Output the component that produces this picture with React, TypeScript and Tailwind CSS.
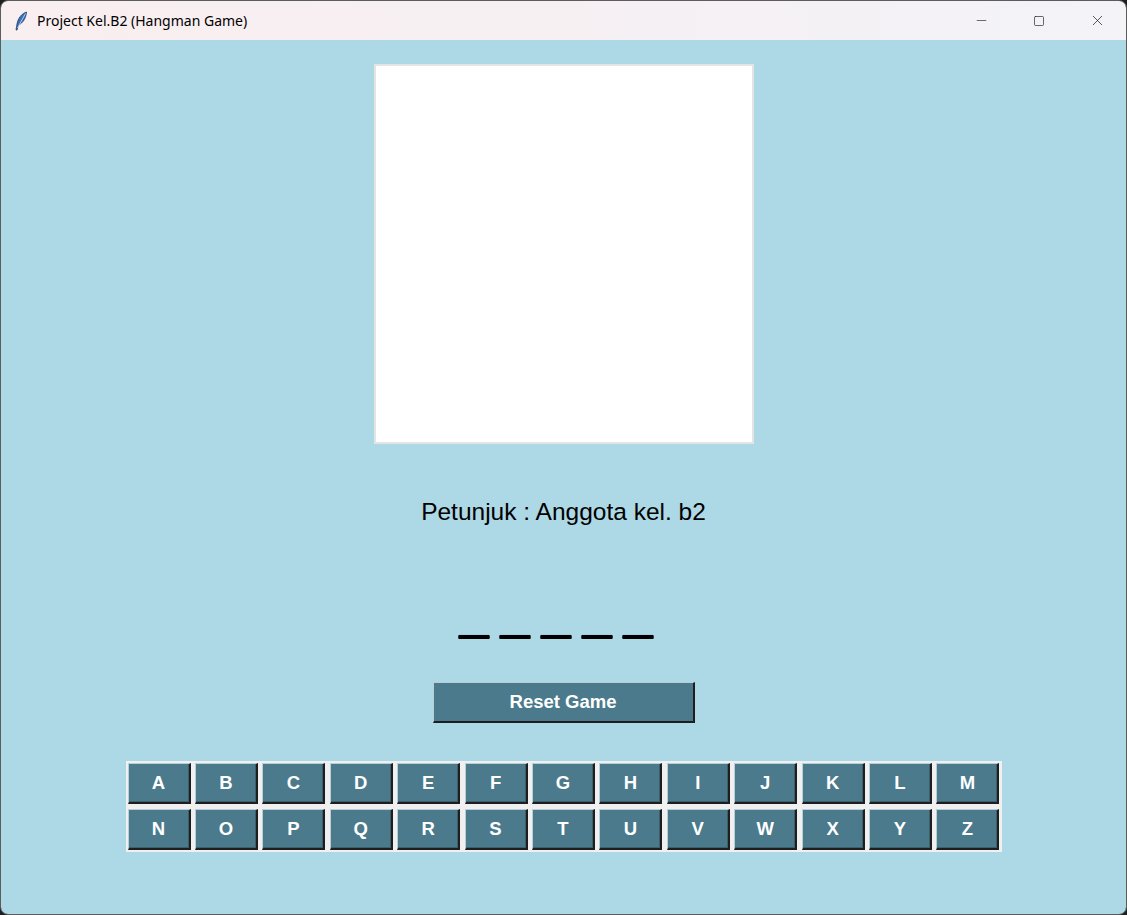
import { Minus, Square, X } from 'lucide-react';

const ROW_1 = ['A', 'B', 'C', 'D', 'E', 'F', 'G', 'H', 'I', 'J', 'K', 'L', 'M'];
const ROW_2 = ['N', 'O', 'P', 'Q', 'R', 'S', 'T', 'U', 'V', 'W', 'X', 'Y', 'Z'];

function Feather() {
  return (
    <svg width="14" height="20" viewBox="0 0 14 20">
      <path d="M12.5 1 C8 2.5 4 7 3 13 L2 19 L3 19 L4.5 14 C9 12 12 7 12.5 1 Z" fill="#3b6fb5" stroke="#1d3f75" strokeWidth="0.8" />
      <path d="M11.5 2.5 L3.5 17" stroke="#cfe0f5" strokeWidth="0.8" />
    </svg>
  );
}

function TitleBar() {
  return (
    <div className="h-[39px] flex items-center bg-gradient-to-r from-[#f9eef0] via-[#f6f0f3] to-[#f3f3f8] font-['Noto_Sans',sans-serif]">
      <div className="ml-[13px] mr-[9px] flex items-center">
        <Feather />
      </div>
      <span className="text-[14px] text-black">Project Kel.B2 (Hangman Game)</span>
      <div className="ml-auto flex items-center h-full">
        <div className="w-[58px] h-full flex items-center justify-center">
          <Minus size={15} strokeWidth={1} color="#1a1a1a" />
        </div>
        <div className="w-[58px] h-full flex items-center justify-center">
          <Square size={12} strokeWidth={1.3} color="#1a1a1a" className="rounded-[2px]" />
        </div>
        <div className="w-[58px] h-full flex items-center justify-center">
          <X size={17} strokeWidth={1} color="#1a1a1a" />
        </div>
      </div>
    </div>
  );
}

function LetterKey({ letter }: { letter: string }) {
  return (
    <button className="w-[63px] h-[41px] bg-[#4a7a8c] border-t border-l border-[#b9cfd6] border-r-2 border-b-2 border-r-[#1e1e1e] border-b-[#1e1e1e] shadow-[inset_-1px_-1px_0_#3a5f6d] text-white font-bold text-[18.5px] font-['Liberation_Sans',Arial,sans-serif] flex items-center justify-center">
      {letter}
    </button>
  );
}

export default function App() {
  return (
    <div className="w-[1127px] h-[915px] bg-[#1f1f1f]">
      <div className="w-full h-full rounded-lg overflow-hidden border border-[#5c5c5c] flex flex-col">
        <TitleBar />
        <main className="flex-1 bg-[#add8e6] flex flex-col items-center font-['Liberation_Sans',Arial,sans-serif]">
          {/* Canvas */}
          <div className="mt-[24px] w-[380px] h-[380px] bg-white border-2 border-[#e4e4e4]" />

          {/* Hint */}
          <p className="mt-[56px] text-[24.5px] text-black leading-none">Petunjuk : Anggota kel. b2</p>

          {/* Word */}
          <p className="mt-[59px] pr-[15px] text-[54px] font-bold text-black leading-none [word-spacing:-4px] [text-shadow:0_1px_0_#000,0_2px_0_#000]">_ _ _ _ _</p>

          {/* Reset */}
          <button className="mt-[44px] w-[262px] h-[41px] bg-[#4a7a8c] border-t border-l border-[#b9cfd6] border-r-2 border-b-2 border-r-[#1e1e1e] border-b-[#1e1e1e] text-white font-bold text-[18.5px] flex items-center justify-center">
            Reset Game
          </button>

          {/* Keyboard */}
          <div className="mt-[38px] w-[876px] bg-[#f0f0f0] pt-[2px] pb-[2px] px-[2px] flex flex-col gap-[5px]">
            <div className="flex justify-between">
              {ROW_1.map((l) => (
                <LetterKey key={l} letter={l} />
              ))}
            </div>
            <div className="flex justify-between">
              {ROW_2.map((l) => (
                <LetterKey key={l} letter={l} />
              ))}
            </div>
          </div>
        </main>
      </div>
    </div>
  );
}
